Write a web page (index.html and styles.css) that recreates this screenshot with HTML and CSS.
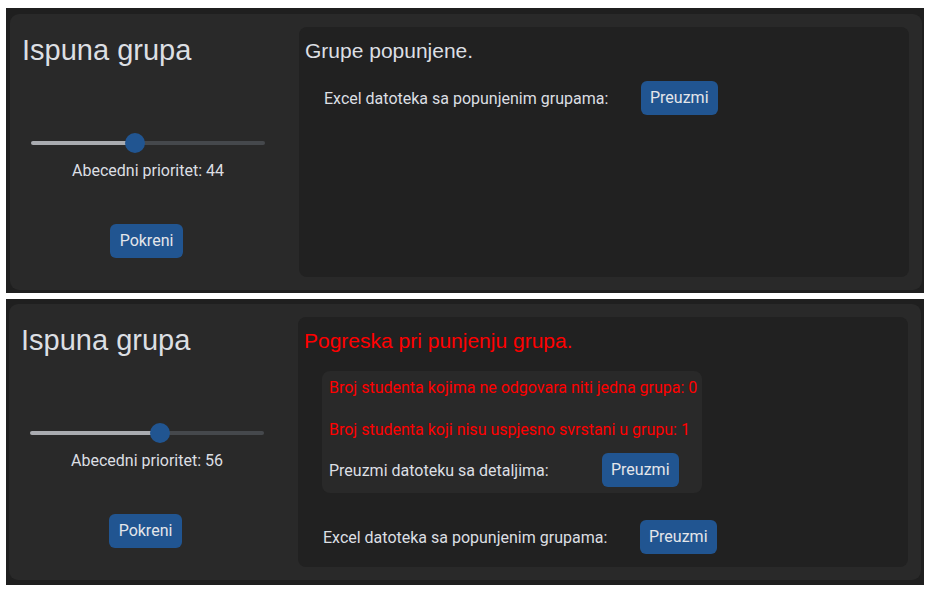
FILE: index.html
```html
<!DOCTYPE html>
<html lang="hr">
<head>
<meta charset="utf-8">
<title>Ispuna grupa</title>
<link rel="stylesheet" href="styles.css">
</head>
<body>
  <section class="frame frame-first">
    <div class="card">
      <div class="controls">
        <h1 class="title">Ispuna grupa</h1>
        <input class="slider" type="range" min="0" max="100" value="44" style="--p:0.44">
        <div class="slider-label">Abecedni prioritet: 44</div>
        <button class="btn btn-run">Pokreni</button>
      </div>
      <div class="result">
        <h3 class="result-title">Grupe popunjene.</h3>
        <div class="row">
          <span class="row-label">Excel datoteka sa popunjenim grupama:</span>
          <button class="btn">Preuzmi</button>
        </div>
      </div>
    </div>
  </section>

  <section class="frame frame-second">
    <div class="card">
      <div class="controls">
        <h1 class="title">Ispuna grupa</h1>
        <input class="slider" type="range" min="0" max="100" value="56" style="--p:0.56">
        <div class="slider-label">Abecedni prioritet: 56</div>
        <button class="btn btn-run">Pokreni</button>
      </div>
      <div class="result">
        <h3 class="result-title error">Pogreska pri punjenju grupa.</h3>
        <div class="error-box">
          <p class="error-line">Broj studenta kojima ne odgovara niti jedna grupa: 0</p>
          <p class="error-line second">Broj studenta koji nisu uspjesno svrstani u grupu: 1</p>
          <div class="row row-details">
            <span class="row-label">Preuzmi datoteku sa detaljima:</span>
            <button class="btn">Preuzmi</button>
          </div>
        </div>
        <div class="row">
          <span class="row-label">Excel datoteka sa popunjenim grupama:</span>
          <button class="btn">Preuzmi</button>
        </div>
      </div>
    </div>
  </section>
</body>
</html>
```

FILE: styles.css
```css
* { box-sizing: border-box; }

html, body {
  margin: 0;
  padding: 0;
  background: #ffffff;
}

body {
  padding-top: 8px;
  padding-left: 6px;
  font-family: Roboto, "Liberation Sans", sans-serif;
  font-size: 16px;
  color: #dcdfe3;
}

.frame {
  width: 918px;
  background: #1f1f1f;
}

.frame-first {
  height: 285px;
  padding: 6px 2px 3px 4px;
}

.frame-second {
  margin-top: 6px;
  height: 286px;
  padding: 5px 3px 6px 3px;
}

.card {
  display: flex;
  gap: 24px;
  height: 276px;
  padding: 13px 13px 13px 11px;
  background: #292929;
  border-radius: 9px;
}

.controls {
  width: 254px;
  flex: none;
  display: flex;
  flex-direction: column;
  align-items: center;
}

.title {
  align-self: flex-start;
  margin: 6px 0 0 1px;
  font-family: "Liberation Sans", Arial, sans-serif;
  font-weight: normal;
  font-size: 29px;
  line-height: 35px;
  color: #dcdfe3;
}

.slider {
  -webkit-appearance: none;
  appearance: none;
  width: 234px;
  height: 20px;
  margin: 65px 0 0;
  padding: 0;
  background: transparent;
}

.slider::-webkit-slider-runnable-track {
  height: 4px;
  border-radius: 2px;
  background: linear-gradient(to right,
    #a9abb0 0,
    #a9abb0 calc(10px + (100% - 20px) * var(--p)),
    #45484c calc(10px + (100% - 20px) * var(--p)),
    #45484c 100%);
}

.slider::-webkit-slider-thumb {
  -webkit-appearance: none;
  appearance: none;
  width: 20px;
  height: 20px;
  margin-top: -8px;
  border: none;
  border-radius: 50%;
  background: #215591;
}

.slider-label {
  margin-top: 8px;
  line-height: 19px;
}

.btn {
  font-family: Roboto, "Liberation Sans", sans-serif;
  font-size: 16px;
  line-height: 22px;
  padding: 6px 9px;
  height: 34px;
  border: none;
  border-radius: 6px;
  background: #215591;
  color: #e4e6ea;
  flex: none;
}

.btn-run {
  margin-top: 44px;
  margin-right: 3px;
  padding: 6px 10px;
}

.result {
  flex: 1;
  height: 250px;
  padding: 11px 6px 0;
  background: #212121;
  border-radius: 8px;
}

.result-title {
  margin: 0 0 18px;
  font-family: "Liberation Sans", Arial, sans-serif;
  font-weight: normal;
  font-size: 21px;
  line-height: 25px;
  color: #dcdfe3;
}

.result-title.error {
  color: #ff0000;
}

.row {
  display: flex;
  align-items: center;
  margin-left: 19px;
}

.row-label {
  width: 317px;
  flex: none;
}

.error-box {
  width: fit-content;
  margin: 0 0 27px 18px;
  padding: 7px 5px 6px 7px;
  background: #292929;
  border-radius: 8px;
}

.error-line {
  margin: 0;
  line-height: 20px;
  color: #ff0000;
  white-space: nowrap;
}

.error-line.second {
  margin-top: 22px;
}

.row-details {
  margin: 13px 0 0;
}

.row-details .row-label {
  width: 273px;
}
```
